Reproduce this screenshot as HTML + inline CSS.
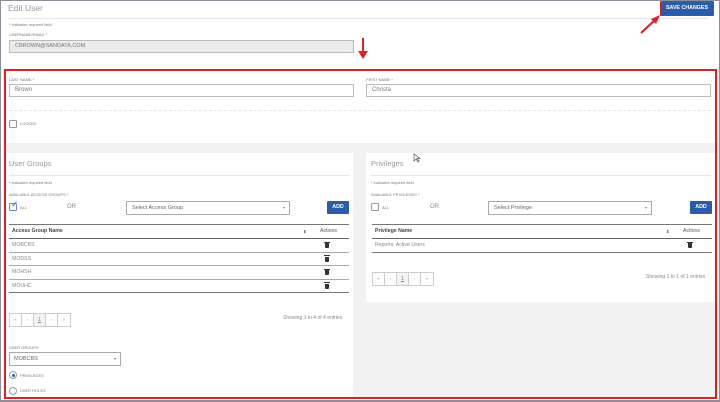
<!DOCTYPE html>
<html><head><meta charset="utf-8"><style>
*{box-sizing:border-box;margin:0;padding:0}
body{width:720px;height:402px;overflow:hidden;background:#fff;font-family:"Liberation Sans",sans-serif;color:#666;position:relative}
.a{position:absolute}
.t{font-size:4px;color:#777;white-space:nowrap}
.inp{position:absolute;border:1px solid #bbb;height:13px;font-size:6px;line-height:11px;color:#777;background:#fff;padding-left:5px}
.btn{position:absolute;background:#2a5caa;color:#fff;font-weight:bold;font-size:5.3px;text-align:center;border-radius:1px}
.cb{position:absolute;width:8px;height:8px;border:1px solid #999;border-radius:1px;background:#fff}
.tbl{position:absolute;border-top:1.5px solid #777;font-size:5.2px}
.tbl .h{height:14px;border-bottom:1.5px solid #666;color:#444;font-weight:bold;line-height:13px;padding-left:3px;position:relative}
.tbl .r{height:13.5px;border-bottom:1px solid #aaa;line-height:13px;padding-left:3px;color:#888;position:relative}
.trash{position:absolute;width:4px;height:5px;background:#333;top:4px;border-radius:0 0 1px 1px}
.trash:before{content:"";position:absolute;left:-1px;top:-1.5px;width:6px;height:1px;background:#333}
.pg{position:absolute;height:14px;border:1px solid #ccc;display:flex;font-size:4.5px;color:#888}
.pg span{width:12.2px;border-right:1px solid #ccc;text-align:center;line-height:12px}
.pg span:last-child{border-right:0}
.sel{position:absolute;border:1px solid #aaa;height:14px;font-size:5.5px;line-height:12px;padding-left:5px;color:#666;background:#fff}
.sel:after{content:"▾";position:absolute;right:4px;top:0;font-size:4px;color:#777}
</style></head><body>
<div class="a" style="left:0;top:0;width:720px;height:402px;border:1.5px solid #8a8f99;border-bottom:2px solid #8a8f99"></div>
<div class="a" style="left:8px;top:3px;font-size:8.5px;color:#999">Edit User</div>
<div class="a" style="left:8px;top:18px;width:700px;height:1px;background:#e6e6e6"></div>
<div class="btn" style="left:660px;top:1px;width:54px;height:15px;border:1.5px solid #e0201f;line-height:12px">SAVE CHANGES</div>
<svg class="a" style="left:638px;top:12px" width="26" height="26"><line x1="3" y1="21" x2="18" y2="7" stroke="#e0201f" stroke-width="2.2"/><polygon points="22,3 13,7 18,12" fill="#e0201f"/></svg>
<svg class="a" style="left:357px;top:37px" width="12" height="24"><line x1="6" y1="1" x2="6" y2="15" stroke="#e0201f" stroke-width="2"/><polygon points="1,14 11,14 6,22" fill="#e0201f"/></svg>
<div class="a t" style="left:9px;top:22px">* indicates required field</div>
<div class="a t" style="left:9px;top:32px">USERNAME/EMAIL *</div>
<div class="inp" style="left:9px;top:40px;width:345px;background:#ebebeb;font-size:5.5px">CBROWN@SANDATA.COM</div>

<div class="a" style="left:5px;top:143px;width:710px;height:255px;background:#f2f2f2"></div>
<div class="a t" style="left:9px;top:77px">LAST NAME *</div>
<div class="inp" style="left:9px;top:84px;width:345px">Brown</div>
<div class="a t" style="left:366px;top:77px">FIRST NAME *</div>
<div class="inp" style="left:366px;top:84px;width:345px">Christa</div>
<div class="a" style="left:9px;top:110px;width:702px;border-top:1px dashed #e6e6e6"></div>
<div class="cb" style="left:9px;top:120px"></div>
<div class="a t" style="left:20px;top:121px">LOCKED</div>

<div class="a" style="left:6px;top:153px;width:347px;height:245px;background:#fff"></div>
<div class="a" style="left:9px;top:159px;font-size:7.5px;color:#999">User Groups</div>
<div class="a" style="left:9px;top:175px;width:340px;height:1px;background:#e6e6e6"></div>
<div class="a t" style="left:9px;top:180px">* indicates required field</div>
<div class="a t" style="left:9px;top:192px">AVAILABLE ACCESS GROUPS *</div>
<div class="cb" style="left:9px;top:203px;border-color:#6d8cc0"></div>
<div class="a" style="left:11px;top:199px;font-size:9px;color:#3a6bb5">✓</div>
<div class="a t" style="left:20px;top:205px">ALL</div>
<div class="a" style="left:67px;top:204px;font-size:6px;color:#888">OR</div>
<div class="sel" style="left:126px;top:201px;width:164px">Select Access Group</div>
<div class="btn" style="left:327px;top:201px;width:22px;height:13px;line-height:13px">ADD</div>
<div class="tbl" style="left:9px;top:224px;width:340px">
<div class="h">Access Group Name<span style="position:absolute;left:294px;font-size:4px">⇕</span><span style="position:absolute;left:311px;color:#555;font-weight:normal">Actions</span></div>
<div class="r">MOBCBS<i class="trash" style="left:316px"></i></div>
<div class="r">MODSS<i class="trash" style="left:316px"></i></div>
<div class="r">MOHSH<i class="trash" style="left:316px"></i></div>
<div class="r" style="border-bottom:1px solid #777">MOUHC<i class="trash" style="left:316px"></i></div>
</div>
<div class="pg" style="left:9px;top:313px;width:62px"><span>«</span><span>‹</span><span style="background:#f3f3f3;font-size:5.5px;text-decoration:underline">1</span><span>›</span><span>»</span></div>
<div class="a" style="left:283px;top:315px;font-size:5px;color:#888">Showing 1 to 4 of 4 entries</div>
<div class="a t" style="left:9px;top:345px">USER GROUPS</div>
<div class="sel" style="left:9px;top:352px;width:112px;padding-left:4px">MOBCBS</div>
<div class="a" style="left:9px;top:371px;width:8px;height:8px;border:1px solid #999;border-radius:50%;background:#fff"><div style="margin:1.5px;width:3px;height:3px;border-radius:50%;background:#2a5caa"></div></div>
<div class="a t" style="left:20px;top:373px">PRIVILEGES</div>
<div class="a" style="left:9px;top:387px;width:8px;height:8px;border:1px solid #999;border-radius:50%;background:#fff"></div>
<div class="a t" style="left:20px;top:388px">USER ROLES</div>

<div class="a" style="left:366px;top:153px;width:349px;height:149px;background:#fff"></div>
<div class="a" style="left:371px;top:159px;font-size:7.5px;color:#999">Privileges</div>
<div class="a" style="left:371px;top:175px;width:340px;height:1px;background:#e6e6e6"></div>
<div class="a t" style="left:371px;top:180px">* indicates required field</div>
<div class="a t" style="left:371px;top:192px">AVAILABLE PRIVILEGES *</div>
<div class="cb" style="left:371px;top:203px"></div>
<div class="a t" style="left:382px;top:205px">ALL</div>
<div class="a" style="left:430px;top:204px;font-size:6px;color:#888">OR</div>
<div class="sel" style="left:488px;top:201px;width:164px">Select Privilege</div>
<div class="btn" style="left:690px;top:201px;width:22px;height:13px;line-height:13px">ADD</div>
<div class="tbl" style="left:372px;top:224px;width:340px">
<div class="h">Privilege Name<span style="position:absolute;left:294px;font-size:4px">⇕</span><span style="position:absolute;left:311px;color:#555;font-weight:normal">Actions</span></div>
<div class="r" style="border-bottom:1px solid #777">Reports: Active Users<i class="trash" style="left:316px"></i></div>
</div>
<div class="pg" style="left:372px;top:272px;width:62px"><span>«</span><span>‹</span><span style="background:#f3f3f3;font-size:5.5px;text-decoration:underline">1</span><span>›</span><span>»</span></div>
<div class="a" style="left:646px;top:274px;font-size:5px;color:#888">Showing 1 to 1 of 1 entries</div>
<svg class="a" style="left:413px;top:153px" width="8" height="10"><path d="M1 1 L1 8 L3 6 L5 9 L6 8 L4 5.5 L7 5.5 Z" fill="#fff" stroke="#555" stroke-width=".7"/></svg>

<div class="a" style="left:4px;top:69px;width:713px;height:330px;border:2px solid #e0201f"></div>
</body></html>
